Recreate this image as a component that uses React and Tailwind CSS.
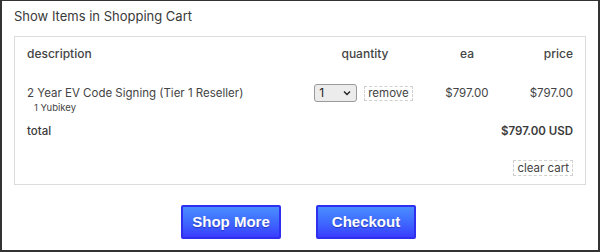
import React from "react";

export default function App() {
  return (
    <div
      className="w-[600px] h-[252px] bg-white border-t border-x-2 border-b-2 border-[#333] box-border text-[#444] font-['Inter','Noto_Sans',sans-serif]"
    >
      <div className="pt-[7px] pl-[12px] text-[13px] leading-[16px] text-[#3a3a3a]">
        Show Items in Shopping Cart
      </div>
      <div className="mx-[12px] mt-[12px] border border-[#dcdcdc] px-[12px] pt-[8px] pb-[8px]">
        <div className="flex items-center h-[18px] text-[12px] font-medium">
          <div className="w-[280px]">description</div>
          <div className="w-[116px] text-center">quantity</div>
          <div className="w-[88px] text-center">ea</div>
          <div className="flex-1 text-right">price</div>
        </div>
        <div className="flex mt-[21px] text-[11.5px]">
          <div className="w-[280px]">
            <div className="h-[18px] leading-[18px]">2 Year EV Code Signing (Tier 1 Reseller)</div>
            <div className="pl-[7px] text-[9.5px] leading-[12px]">1 Yubikey</div>
          </div>
          <div className="w-[116px] flex justify-center items-start gap-[7px] pr-[3px]">
            <div className="w-[43px] h-[18px] rounded-[3px] border border-[#9a9a9a] bg-[#ececec] flex items-center justify-between pl-[4px] pr-[5px] text-[12px] text-[#222]">
              <span>1</span>
              <svg width="8" height="6" viewBox="0 0 8 6" fill="none">
                <path d="M1 1.5 L4 4.5 L7 1.5" stroke="#222" strokeWidth="1.4" />
              </svg>
            </div>
            <div className="mt-[2px] h-[15px] px-[3px] border border-dashed border-[#d0d0d0] leading-[13px] text-[11.5px]">
              remove
            </div>
          </div>
          <div className="w-[88px] text-center h-[18px] leading-[18px]">$797.00</div>
          <div className="flex-1 text-right h-[18px] leading-[18px]">$797.00</div>
        </div>
        <div className="flex items-center justify-between mt-[9px] h-[18px] text-[11.5px] font-medium text-[#3a3a3a]">
          <div>total</div>
          <div className="font-semibold">$797.00 USD</div>
        </div>
        <div className="flex justify-end mt-[19px]">
          <div className="h-[16px] px-[3px] border border-dashed border-[#d0d0d0] leading-[14px] text-[11.5px]">
            clear cart
          </div>
        </div>
      </div>
      <div className="flex justify-center gap-[35px] mt-[20px] pr-[3px]">
        {["Shop More", "Checkout"].map((t) => (
          <button
            key={t}
            className="w-[100px] h-[34px] rounded-[2px] border-2 border-[#2f2ff0] bg-gradient-to-b from-[#4b8dff] to-[#3b3bff] text-white font-bold text-[15px] font-['Liberation_Sans',Arial,sans-serif] [text-shadow:0_1px_1px_rgba(0,0,80,0.4)]"
          >
            {t}
          </button>
        ))}
      </div>
    </div>
  );
}
